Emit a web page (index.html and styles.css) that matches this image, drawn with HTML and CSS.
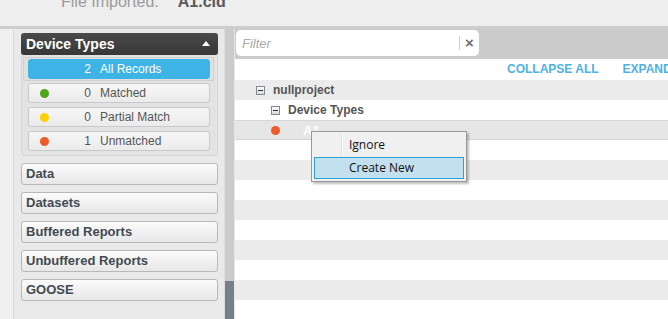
FILE: index.html
```html
<!DOCTYPE html>
<html lang="en">
<head>
  <meta charset="UTF-8">
  <title>Device Types Import</title>
  <link rel="stylesheet" href="styles.css">
</head>
<body>
  <div class="topbar">
    <div class="topbar-text"><span class="file-label">File Imported:</span><span class="file-name">A1.cid</span></div>
  </div>

  <div class="main">
    <aside class="sidebar">
      <div class="panel">
        <div class="types">
          <div class="types-head">Device Types <span class="caret"></span></div>
          <ul class="type-list">
            <li class="type-item active"><div class="pill"><span class="dot"></span><span class="count">2</span><span class="label">All Records</span></div></li>
            <li class="type-item"><div class="pill"><span class="dot green"></span><span class="count">0</span><span class="label">Matched</span></div></li>
            <li class="type-item"><div class="pill"><span class="dot yellow"></span><span class="count">0</span><span class="label">Partial Match</span></div></li>
            <li class="type-item"><div class="pill"><span class="dot red"></span><span class="count">1</span><span class="label">Unmatched</span></div></li>
          </ul>
        </div>
        <div class="nav-btn">Data</div>
        <div class="nav-btn">Datasets</div>
        <div class="nav-btn">Buffered Reports</div>
        <div class="nav-btn">Unbuffered Reports</div>
        <div class="nav-btn">GOOSE</div>
      </div>
    </aside>

    <div class="scroll"><div class="thumb"></div></div>

    <section class="content">
      <div class="filter-bar">
        <div class="filter">
          <span class="placeholder">Filter</span>
          <span class="clear">&#215;</span>
        </div>
      </div>
      <div class="actions">
        <a>COLLAPSE ALL</a>
        <a>EXPAND ALL</a>
      </div>
      <div class="tree">
        <div class="row level-1"><span class="toggle"></span><span class="node">nullproject</span></div>
        <div class="row level-2"><span class="toggle"></span><span class="node">Device Types</span></div>
        <div class="row level-3 selected"><span class="dot red"></span><span class="node leaf">A1</span></div>
        <div class="row"></div>
        <div class="row"></div>
        <div class="row"></div>
        <div class="row"></div>
        <div class="row"></div>
        <div class="row"></div>
        <div class="row"></div>
        <div class="row"></div>
        <div class="row"></div>
      </div>

      <div class="menu">
        <div class="menu-item">Ignore</div>
        <div class="menu-item hover">Create New</div>
      </div>
    </section>
  </div>
</body>
</html>
```

FILE: styles.css
```css
* {
  box-sizing: border-box;
}
body {
  margin: 0;
  background-color: #f0f0f0;
  font-family: "Liberation Sans", Arial, sans-serif;
  overflow: hidden;
}
.topbar {
  height: 29px;
  background-color: #eeeeee;
  border-bottom: 3px solid #cdcdcd;
  overflow: hidden;
}
.topbar-text {
  margin-top: -7px;
  padding-left: 61px;
  font-size: 16px;
  line-height: 18px;
  white-space: nowrap;
}
.file-label {
  color: #9b9b9b;
}
.file-name {
  margin-left: 19px;
  color: #5a5a5a;
  font-weight: bold;
}
.main {
  display: flex;
  height: 290px;
  overflow: hidden;
}

/* left column */
.sidebar {
  width: 225px;
  flex-shrink: 0;
}
.panel {
  height: 100%;
  margin-left: 13px;
  padding: 4px 6px 0 7px;
  background-color: #e9e9e9;
  border-left: 1px solid #dcdcdc;
  border-right: 1px solid #dcdcdc;
}
.types {
  background-color: #e3e3e3;
  border: 1px solid #d6d6d6;
  border-top: none;
  border-radius: 4px;
}
.types-head {
  position: relative;
  height: 22px;
  margin: 0 -1px;
  padding-left: 5px;
  background: linear-gradient(#4a4a4a, #373737);
  border-radius: 3px;
  color: #fff;
  font-weight: bold;
  font-size: 14px;
  line-height: 22px;
}
.caret {
  position: absolute;
  right: 8px;
  top: 8px;
  border-left: 4px solid transparent;
  border-right: 4px solid transparent;
  border-bottom: 5px solid #fff;
}
.type-list {
  list-style: none;
  margin: 2px 0 0;
  padding: 0 3px 2px 1px;
}
.type-item {
  padding: 1px 3px 1px 4px;
  border: 1px solid transparent;
}
.type-item.active {
  background-color: #e0e0e0;
  border-color: #d0d0d0;
}
.pill {
  display: flex;
  align-items: center;
  height: 20px;
  border: 1px solid #c9c9c9;
  border-radius: 3px;
  background: linear-gradient(#f6f6f6, #ebebeb);
  font-size: 12px;
  color: #555;
}
.active .pill {
  background: #3db4e5;
  border-color: #3db4e5;
  color: #fff;
}
.dot {
  width: 9px;
  height: 9px;
  border-radius: 50%;
  flex-shrink: 0;
}
.pill .dot {
  margin-left: 11px;
}
.dot.green {
  background-color: #4ea41b;
}
.dot.yellow {
  background-color: #ffd000;
}
.dot.red {
  background-color: #f0592a;
}
.count {
  width: 42px;
  text-align: right;
}
.label {
  margin-left: 9px;
}
.nav-btn {
  height: 22px;
  margin-top: 7px;
  padding-left: 4px;
  border: 1px solid #b8b8b8;
  border-radius: 3px;
  background: linear-gradient(#fbfbfb, #e7e7e7);
  color: #434a52;
  font-weight: bold;
  font-size: 13px;
  line-height: 20px;
}

/* scrollbar */
.scroll {
  display: flex;
  flex-direction: column;
  width: 10px;
  flex-shrink: 0;
  background-color: #cbcbcb;
  border-right: 1px solid #e6e6e6;
}
.thumb {
  margin-top: auto;
  height: 38px;
  background-color: #76808a;
}

/* right side */
.content {
  position: relative;
  flex: 1;
  min-width: 0;
  background-color: #fff;
  overflow: hidden;
}
.filter-bar {
  height: 30px;
  padding: 1px 0 0 1px;
  background-color: #cbcbcb;
}
.filter {
  display: flex;
  align-items: center;
  width: 243px;
  height: 26px;
  background-color: #fff;
  border-radius: 5px;
}
.placeholder {
  flex: 1;
  padding-left: 6px;
  color: #a9a9a9;
  font-style: italic;
  font-size: 13px;
}
.clear {
  width: 20px;
  height: 14px;
  border-left: 1px solid #cfcfcf;
  color: #707070;
  font-weight: bold;
  font-size: 15px;
  line-height: 13px;
  text-align: center;
}
.actions {
  display: flex;
  gap: 24px;
  height: 21px;
  padding-left: 272px;
  white-space: nowrap;
  font-weight: bold;
  font-size: 12px;
  line-height: 21px;
  color: #4db2e6;
}
.row {
  display: flex;
  align-items: center;
  height: 20px;
  font-weight: bold;
  font-size: 12px;
  color: #555;
}
.row:nth-child(odd) {
  background-color: #ececec;
}
.row.selected {
  background-color: #e6e6e6;
  border-top: 1px solid #d7d7d7;
  border-bottom: 1px solid #d7d7d7;
}
.level-1 {
  padding-left: 21px;
}
.level-2 {
  padding-left: 36px;
}
.level-3 {
  padding-left: 36px;
}
.toggle {
  position: relative;
  width: 9px;
  height: 9px;
  margin-right: 8px;
  border: 1px solid #7d8b98;
  background: linear-gradient(#ffffff, #d9d9d9);
}
.toggle::after {
  content: '';
  position: absolute;
  left: 1px;
  top: 3px;
  width: 5px;
  height: 1px;
  background-color: #333;
}
.leaf {
  margin-left: 23px;
  color: #fff;
  font-size: 13px;
}

/* context menu */
.menu {
  position: absolute;
  left: 76px;
  top: 102px;
  width: 156px;
  padding: 2px;
  background-color: #f0f0f0;
  border: 1px solid #979797;
  box-shadow: 2px 2px 2px rgba(0, 0, 0, 0.25);
  font-family: "Open Sans", "Noto Sans", sans-serif;
  font-size: 12px;
  color: #111;
}
.menu::before {
  content: '';
  position: absolute;
  left: 29px;
  top: 2px;
  bottom: 2px;
  width: 1px;
  background-color: #e0e0e0;
  border-right: 1px solid #fff;
}
.menu-item {
  position: relative;
  height: 22px;
  padding-left: 34px;
  border: 1px solid transparent;
  line-height: 20px;
}
.menu-item + .menu-item {
  margin-top: 1px;
}
.menu-item.hover {
  background-color: #c3e0ef;
  border-color: #29a0d8;
}
```
